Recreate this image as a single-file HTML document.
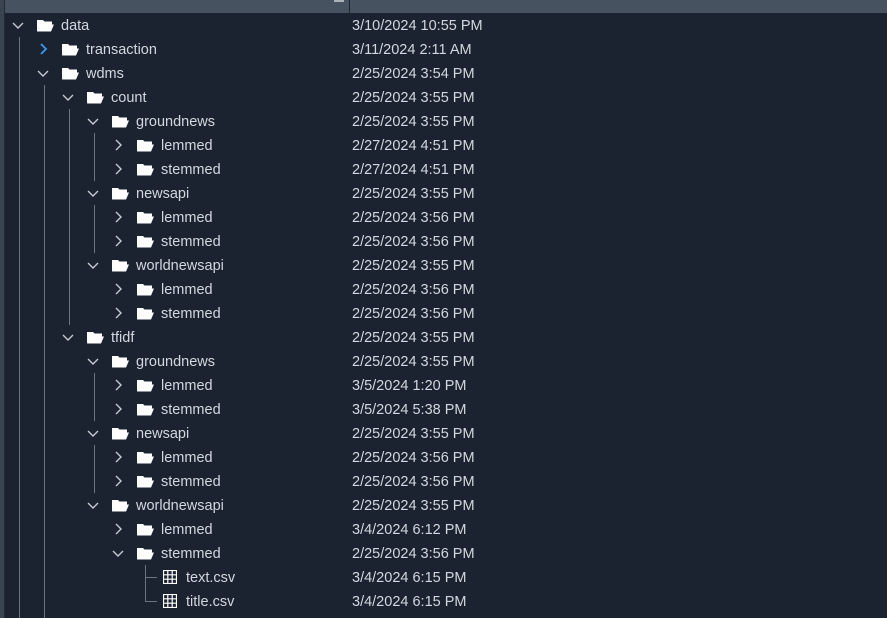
<!DOCTYPE html>
<html><head><meta charset="utf-8"><style>
html,body{margin:0;padding:0;}
body{width:887px;height:618px;background:#1b2330;position:relative;overflow:hidden;font-family:"Liberation Sans",sans-serif;font-size:14.5px;color:#d2d8df;}
.hdr{position:absolute;left:0;top:0;width:887px;height:13px;background:#46525f;}
.sep{position:absolute;left:349px;top:0;width:1px;height:13px;background:#1e2631;}
.edge{position:absolute;left:0;top:0;width:4px;height:618px;background:#3a4450;}
.edge2{position:absolute;left:4px;top:0;width:1px;height:618px;background:#222a35;}
.row{position:absolute;left:0;height:24px;width:887px;}
.row span{position:absolute;top:5px;line-height:16px;white-space:nowrap;}
.row svg{position:absolute;}
.v{position:absolute;width:1px;background:#6b737c;}
.h{position:absolute;height:1px;background:#6b737c;}
</style></head><body>
<div class="hdr"></div><div class="sep"></div>
<div class="edge"></div><div class="edge2"></div>
<div style="position:absolute;left:334px;top:0;width:10px;height:2px;background:#aab2ba"></div>

<div class="v" style="left:19px;top:37px;height:581px"></div>
<div class="v" style="left:44px;top:85px;height:533px"></div>
<div class="v" style="left:69px;top:109px;height:216px"></div>
<div class="v" style="left:94px;top:133px;height:48px"></div>
<div class="v" style="left:94px;top:205px;height:48px"></div>
<div class="v" style="left:94px;top:373px;height:48px"></div>
<div class="v" style="left:94px;top:445px;height:48px"></div>
<div class="v" style="left:145px;top:565px;height:37px"></div>
<div class="h" style="left:145px;top:577px;width:12px"></div>
<div class="h" style="left:145px;top:601px;width:12px"></div>

<svg width="0" height="0" style="position:absolute"><defs>
<g id="fold"><path d="M0 1 h6 l1.5 1.5 h7.5 v3 h-11 l-4 7z" fill="#fff"/><path d="M3.5 5.5 h13.5 l-3 7 h-14z" fill="#fff"/></g>
<g id="dn"><path d="M1 1 l5 5 l5 -5" fill="none" stroke="#c5cad0" stroke-width="1.4"/></g>
<g id="rt"><path d="M1 1 l5 5 l-5 5" fill="none" stroke="#c5cad0" stroke-width="1.4"/></g>
<g id="rtb"><path d="M1 1 l5 5 l-5 5" fill="none" stroke="#3a9bf0" stroke-width="1.8"/></g>
<g id="csv"><rect x="0.5" y="0.5" width="13" height="13" fill="none" stroke="#fff" stroke-width="1.2"/><path d="M4.8 0.5v13M9.2 0.5v13M0.5 4.8h13M0.5 9.2h13" stroke="#fff" stroke-width="1.2"/></g>
</defs></svg>

<div id="rows"></div>
<script>
var d=[
[0,'dn','fold','data','3/10/2024 10:55 PM'],
[1,'rtb','fold','transaction','3/11/2024 2:11 AM'],
[1,'dn','fold','wdms','2/25/2024 3:54 PM'],
[2,'dn','fold','count','2/25/2024 3:55 PM'],
[3,'dn','fold','groundnews','2/25/2024 3:55 PM'],
[4,'rt','fold','lemmed','2/27/2024 4:51 PM'],
[4,'rt','fold','stemmed','2/27/2024 4:51 PM'],
[3,'dn','fold','newsapi','2/25/2024 3:55 PM'],
[4,'rt','fold','lemmed','2/25/2024 3:56 PM'],
[4,'rt','fold','stemmed','2/25/2024 3:56 PM'],
[3,'dn','fold','worldnewsapi','2/25/2024 3:55 PM'],
[4,'rt','fold','lemmed','2/25/2024 3:56 PM'],
[4,'rt','fold','stemmed','2/25/2024 3:56 PM'],
[2,'dn','fold','tfidf','2/25/2024 3:55 PM'],
[3,'dn','fold','groundnews','2/25/2024 3:55 PM'],
[4,'rt','fold','lemmed','3/5/2024 1:20 PM'],
[4,'rt','fold','stemmed','3/5/2024 5:38 PM'],
[3,'dn','fold','newsapi','2/25/2024 3:55 PM'],
[4,'rt','fold','lemmed','2/25/2024 3:56 PM'],
[4,'rt','fold','stemmed','2/25/2024 3:56 PM'],
[3,'dn','fold','worldnewsapi','2/25/2024 3:55 PM'],
[4,'rt','fold','lemmed','3/4/2024 6:12 PM'],
[4,'dn','fold','stemmed','2/25/2024 3:56 PM'],
[5,'','csv','text.csv','3/4/2024 6:15 PM'],
[5,'','csv','title.csv','3/4/2024 6:15 PM']
];
var h='';
d.forEach(function(r,i){
 var L=r[0],top=13+24*i,ox=25*L;
 h+='<div class="row" style="top:'+top+'px">';
 if(r[1]){
  if(r[1]=='dn') h+='<svg width="12" height="8" style="left:'+(ox+12)+'px;top:9px"><use href="#dn"/></svg>';
  else h+='<svg width="8" height="12" style="left:'+(ox+15)+'px;top:6px"><use href="#'+r[1]+'"/></svg>';
 }
 if(r[2]=='fold') h+='<svg width="17" height="13" style="left:'+(ox+37)+'px;top:6px"><use href="#fold"/></svg>';
 else h+='<svg width="14" height="14" style="left:'+(ox+38)+'px;top:5px"><use href="#csv"/></svg>';
 h+='<span style="left:'+(ox+61)+'px">'+r[3]+'</span><span style="left:352px">'+r[4]+'</span></div>';
});
document.getElementById('rows').innerHTML=h;
</script>
</body></html>
